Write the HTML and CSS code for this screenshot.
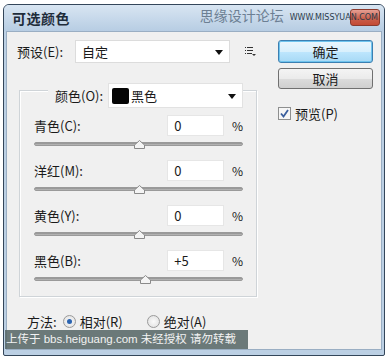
FILE: index.html
```html
<!DOCTYPE html>
<html>
<head>
<meta charset="utf-8">
<link rel="stylesheet" href="styles.css">
</head>
<body>
<div class="window">
  <div class="titlebar">
    <span class="title">可选颜色</span>
    <span class="site">思缘设计论坛</span>
    <span class="url">WWW.MISSYUAN.COM</span>
    <span class="close"></span>
  </div>
  <div class="frame">
    <div class="client">
      <div class="main">
        <div class="left">
          <div class="preset-row">
            <span class="plabel">预设(E):</span>
            <div class="select preset-select"><span>自定</span><i class="arrow"></i></div>
            <svg class="menu-icon" width="12" height="11" viewBox="0 0 12 11">
              <rect x="0" y="1" width="1" height="1" fill="#333"/><rect x="2" y="1" width="6" height="1" fill="#333"/>
              <rect x="0" y="4" width="1" height="1" fill="#333"/><rect x="2" y="4" width="6" height="1" fill="#333"/>
              <rect x="0" y="7" width="1" height="1" fill="#333"/><rect x="2" y="7" width="5" height="1" fill="#333"/>
              <path d="M7 8 L11 8 L9 10 Z" fill="#333"/>
            </svg>
          </div>
          <div class="group">
            <div class="color-row">
              <span class="clabel">颜色(O):</span>
              <div class="select color-select"><span class="swatch"></span><span>黑色</span><i class="arrow"></i></div>
            </div>
            <div class="sliders">
              <div class="slider-row">
                <div class="value-line"><span class="slabel">青色(C):</span><span class="input">0</span><span class="pct">%</span></div>
                <div class="track"><svg class="thumb" style="left:99px" width="11" height="9" viewBox="0 0 11 9"><path d="M0.5 8.5 L0.5 5 L5.5 0.5 L10.5 5 L10.5 8.5 Z" fill="#f4f4f4" stroke="#8a8a8a"/></svg></div>
              </div>
              <div class="slider-row">
                <div class="value-line"><span class="slabel">洋红(M):</span><span class="input">0</span><span class="pct">%</span></div>
                <div class="track"><svg class="thumb" style="left:99px" width="11" height="9" viewBox="0 0 11 9"><path d="M0.5 8.5 L0.5 5 L5.5 0.5 L10.5 5 L10.5 8.5 Z" fill="#f4f4f4" stroke="#8a8a8a"/></svg></div>
              </div>
              <div class="slider-row">
                <div class="value-line"><span class="slabel">黄色(Y):</span><span class="input">0</span><span class="pct">%</span></div>
                <div class="track"><svg class="thumb" style="left:99px" width="11" height="9" viewBox="0 0 11 9"><path d="M0.5 8.5 L0.5 5 L5.5 0.5 L10.5 5 L10.5 8.5 Z" fill="#f4f4f4" stroke="#8a8a8a"/></svg></div>
              </div>
              <div class="slider-row">
                <div class="value-line"><span class="slabel">黑色(B):</span><span class="input">+5</span><span class="pct">%</span></div>
                <div class="track"><svg class="thumb" style="left:105px" width="11" height="9" viewBox="0 0 11 9"><path d="M0.5 8.5 L0.5 5 L5.5 0.5 L10.5 5 L10.5 8.5 Z" fill="#f4f4f4" stroke="#8a8a8a"/></svg></div>
              </div>
            </div>
          </div>
          <div class="method-row">
            <span class="mlabel">方法:</span>
            <span class="radio checked"></span><span class="rtext">相对(R)</span>
            <span class="radio"></span><span class="rtext">绝对(A)</span>
          </div>
        </div>
        <div class="right">
          <div class="btn btn-default">确定</div>
          <div class="btn">取消</div>
          <div class="check-row">
            <svg class="checkbox" width="13" height="13" viewBox="0 0 13 13"><rect x="0.5" y="0.5" width="12" height="12" fill="#f6f6f6" stroke="#8e8f8f"/><path d="M3 6.5 L5.5 9.5 L10 3" fill="none" stroke="#3a5f9e" stroke-width="1.8"/></svg>
            <span>预览(P)</span>
          </div>
        </div>
      </div>
    </div>
  </div>
  <div class="stamp">上传于 bbs.heiguang.com 未经授权 请勿转载</div>
</div>
</body>
</html>
```

FILE: styles.css
```css
html, body {
  margin: 0;
  padding: 0;
  background: #ffffff;
}
body {
  font-family: "Noto Sans CJK SC", "Noto Sans", sans-serif;
  font-size: 12px;
  color: #1a1a1a;
  padding: 4px 3px 0 3px;
  width: 382px;
}
.window {
  position: relative;
  border: 1px solid #34465a;
  border-radius: 6px 6px 2px 2px;
  background: #bcd0e4;
  width: 380px;
}
.titlebar {
  height: 26px;
  display: flex;
  align-items: center;
  background: linear-gradient(#d8e5f2, #b7cde3);
  border-radius: 5px 5px 0 0;
  position: relative;
}
.title {
  font-size: 14px;
  font-weight: bold;
  color: #1e2c3a;
  margin-left: 8px;
  letter-spacing: 0.5px;
}
.site {
  margin-left: auto;
  font-size: 14px;
  color: #6c7f93;
  margin-top: -6px;
}
.url {
  font-family: "DejaVu Sans", sans-serif;
  font-size: 8px;
  color: #2d3b4b;
  margin-left: 6px;
  margin-right: 6px;
  margin-top: -2px;
  position: relative;
  z-index: 2;
}
.close {
  position: absolute;
  right: 4px;
  top: 4px;
  width: 30px;
  height: 17px;
  border-radius: 3px;
  border: 1px solid #8a3a2e;
  background: linear-gradient(#e6a094, #c9604c 55%, #c44a34);
  box-sizing: border-box;
}
.frame {
  padding: 0 2px 5px 2px;
}
.client {
  background: #f0f0f0;
  border: 1px solid #9aaec3;
  height: 319px;
  box-sizing: border-box;
}
.main {
  display: flex;
}
.left {
  width: 260px;
}
.preset-row {
  display: flex;
  align-items: center;
  margin-top: 8px;
  height: 23px;
}
.plabel {
  margin-left: 10px;
  width: 58px;
  font-size: 13px;
  white-space: nowrap;
}
.select {
  position: relative;
  background: #ffffff;
  border: 1px solid #dcdcdc;
  box-sizing: border-box;
  display: flex;
  align-items: center;
  font-size: 13px;
}
.preset-select {
  width: 155px;
  height: 23px;
  padding-left: 6px;
}
.arrow {
  position: absolute;
  right: 6px;
  top: 50%;
  margin-top: -2px;
  width: 0;
  height: 0;
  border-left: 4px solid transparent;
  border-right: 4px solid transparent;
  border-top: 5px solid #111;
}
.menu-icon {
  margin-left: 15px;
}
.group {
  margin: 27px 0 0 12px;
  width: 238px;
  height: 207px;
  border: 1px solid #cfd4d8;
  box-shadow: inset 1px 1px 0 #fff, 1px 1px 0 #fff;
  box-sizing: border-box;
  position: relative;
}
.color-row {
  display: flex;
  align-items: center;
  margin-top: -8px;
  height: 25px;
}
.clabel {
  margin-left: 28px;
  padding: 0 5px 0 7px;
  background: #f0f0f0;
  white-space: nowrap;
  font-size: 13px;
}
.color-select {
  width: 135px;
  height: 25px;
  padding-left: 3px;
  border-color: #e2e2e2;
}
.swatch {
  width: 17px;
  height: 16px;
  background: #050505;
  border-radius: 2px;
  margin-right: 2px;
}
.sliders {
  margin-top: 7px;
}
.slider-row {
  padding: 0 13px 0 14px;
  height: 45px;
}
.value-line {
  display: flex;
  align-items: center;
  height: 21px;
}
.slabel {
  width: 137px;
  font-size: 13px;
  white-space: nowrap;
}
.input {
  width: 58px;
  height: 21px;
  box-sizing: border-box;
  background: #fff;
  border: 1px solid #e6e6e6;
  padding-left: 6px;
  font-size: 13px;
  line-height: 19px;
}
.pct {
  margin-left: 8px;
  font-size: 12px;
}
.track {
  position: relative;
  margin-top: 6px;
  height: 4px;
  border-radius: 2px;
  background: linear-gradient(#8e8e8e, #bdbdbd);
  border: 1px solid #9a9a9a;
  box-sizing: border-box;
  width: 209px;
}
.thumb {
  position: absolute;
  top: -3px;
}
.method-row {
  display: flex;
  align-items: center;
  margin-top: 15px;
  margin-left: 20px;
  font-size: 13px;
}
.mlabel {
  margin-right: 6px;
}
.radio {
  width: 11px;
  height: 11px;
  border-radius: 50%;
  border: 1px solid #9a9a9a;
  background: radial-gradient(#fafafa, #dedede);
  margin-right: 4px;
  position: relative;
}
.radio.checked::after {
  content: "";
  position: absolute;
  left: 3px;
  top: 3px;
  width: 5px;
  height: 5px;
  border-radius: 50%;
  background: #2a63b0;
}
.rtext {
  margin-right: 24px;
}
.right {
  margin-left: 11px;
  padding-top: 8px;
  display: flex;
  flex-direction: column;
}
.btn {
  width: 95px;
  height: 21px;
  box-sizing: border-box;
  border: 1px solid #707070;
  border-radius: 3px;
  background: linear-gradient(#f4f4f4 0%, #ebebeb 50%, #dcdcdc 51%, #cfcfcf 100%);
  display: flex;
  align-items: center;
  justify-content: center;
  font-size: 13px;
  margin-bottom: 7px;
}
.btn-default {
  height: 23px;
  border-color: #3c7fb1;
  box-shadow: inset 0 0 0 1px #6fc4ee;
  background: linear-gradient(#eaf6fd 0%, #d9f0fc 50%, #bee6fd 51%, #a7d9f5 100%);
  margin-bottom: 5px;
}
.check-row {
  display: flex;
  align-items: center;
  margin-top: 8px;
  font-size: 13px;
}
.checkbox {
  margin-right: 4px;
}
.stamp {
  position: absolute;
  left: 1px;
  bottom: 6px;
  width: 243px;
  height: 19px;
  background: rgba(88, 104, 104, 0.88);
  color: #f2f2f2;
  font-family: "Liberation Sans", "Noto Sans CJK SC", sans-serif;
  font-size: 11.5px;
  line-height: 19px;
  padding-left: 1px;
  box-sizing: border-box;
  white-space: nowrap;
  overflow: hidden;
}
```
